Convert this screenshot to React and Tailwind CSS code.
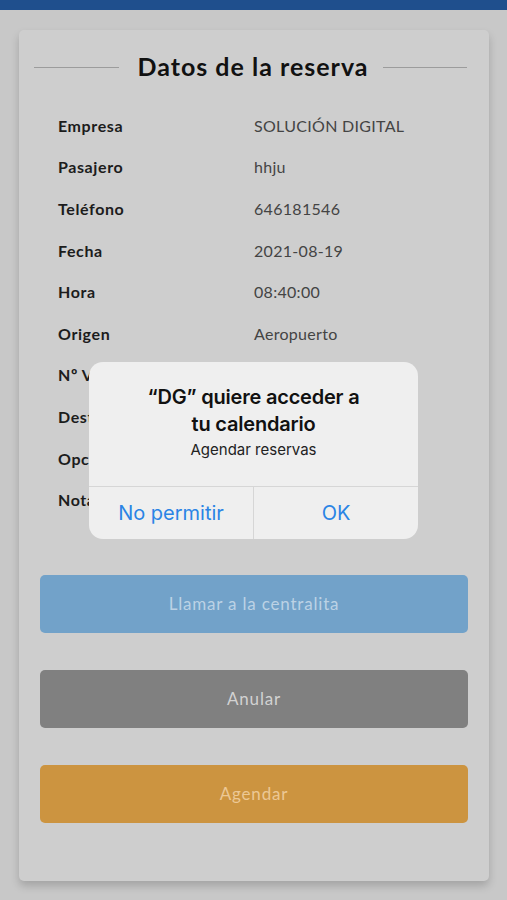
import React from "react";

// values of the last rows sit behind the alert in the screenshot
const rows = [
	["Empresa", "SOLUCIÓN DIGITAL"],
	["Pasajero", "hhju"],
	["Teléfono", "646181546"],
	["Fecha", "2021-08-19"],
	["Hora", "08:40:00"],
	["Origen", "Aeropuerto"],
	["Nº Viajeros", ""],
	["Destino", ""],
	["Opciones", ""],
	["Notas", ""],
];

function PermissionAlert() {
	return (
		<div className="fixed inset-0 flex items-center justify-center">
			<div className="w-[329px] h-[177px] rounded-[14px] bg-[#efefef] flex flex-col font-['Inter',sans-serif]">
				<div className="flex-1 flex flex-col items-center pt-[22px]">
					<p className="text-[20px] leading-[27px] font-semibold text-[#111] text-center tracking-[-0.2px]">
						“DG” quiere acceder a<br />tu calendario
					</p>
					<p className="text-[15px] leading-[20px] text-[#222] mt-[2px]">Agendar reservas</p>
				</div>
				<div className="h-[53px] border-t border-[#d6d6d6] flex">
					<button className="flex-1 text-[20px] text-[#2a84e5] border-r border-[#d6d6d6]">No permitir</button>
					<button className="flex-1 text-[20px] text-[#2a84e5]">OK</button>
				</div>
			</div>
		</div>
	);
}

export default function App() {
	return (
		<div className="w-[507px] h-[900px] bg-[#c8c8c8] relative overflow-hidden font-['Lato',sans-serif]">
			{/* status bar, mostly hidden */}
			<div className="h-[10px] bg-[#1f4f8d]" />

			{/* Card */}
			<div className="mt-[20px] ml-[19px] w-[470px] h-[851px] bg-[#cecece] rounded-[5px] shadow-[0_5px_8px_rgba(0,0,0,0.18)] pt-[22px]">
				<div className="flex items-center h-[30px] pl-[15px] pr-[22px]">
					<div className="flex-1 h-px bg-[#9c9c9c] mr-[19px]" />
					<h1 className="text-[25px] font-bold text-[#111] tracking-[1px]">Datos de la reserva</h1>
					<div className="flex-1 h-px bg-[#9c9c9c] ml-[14px]" />
				</div>

				<div className="mt-[23px] pl-[39px]">
					{rows.map(([label, value]) => (
						<div key={label} className="h-[41.6px] flex items-center text-[16px]">
							<span className="w-[196px] font-bold text-[#1c1c1c] tracking-[0.6px]">{label}</span>
							<span className="text-[#444] tracking-[0.3px]">{value}</span>
						</div>
					))}
				</div>

				<div className="mt-[54px] px-[21px] flex flex-col gap-[37px]">
					<button className="h-[58px] rounded-[5px] bg-[#72a2c9] text-[17px] tracking-[0.8px] text-[#bcd2e5]">Llamar a la centralita</button>
					<button className="h-[58px] rounded-[5px] bg-[#808080] text-[17px] tracking-[0.8px] text-[#d2d2d2]">Anular</button>
					<button className="h-[58px] rounded-[5px] bg-[#cc9440] text-[17px] tracking-[0.8px] text-[#ecc895]">Agendar</button>
				</div>
			</div>

			<PermissionAlert />
		</div>
	);
}
